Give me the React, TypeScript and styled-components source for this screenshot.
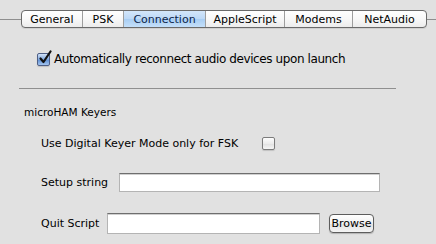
import styled, { createGlobalStyle } from 'styled-components'

const GlobalStyle = createGlobalStyle`
  html, body {
    margin: 0;
    padding: 0;
    background: #e1e1e1;
  }
  body {
    width: 436px;
    height: 244px;
    overflow: hidden;
    font-family: "DejaVu Sans", "Liberation Sans", sans-serif;
    color: #000;
  }
`

const tabs = [
  { label: 'General', w: 60 },
  { label: 'PSK', w: 40 },
  { label: 'Connection', w: 81 },
  { label: 'AppleScript', w: 78 },
  { label: 'Modems', w: 67 },
  { label: 'NetAudio', w: 73 },
]

// @ NOTE tab strip

const TabStrip = styled.div`
  display: flex;
  align-items: center;
  margin-top: 10px;
  height: 18px;
`

const Rule = styled.div<{ $w?: number }>`
  height: 1px;
  background: #8e8e8e;
  width: ${(p) => (p.$w ? `${p.$w}px` : 'auto')};
  flex: ${(p) => (p.$w ? 'none' : '1')};
`

const Segments = styled.div`
  display: flex;
  height: 16px;
  border: 1px solid #6a6a6a;
  border-radius: 4px;
  overflow: hidden;
  background: linear-gradient(#ffffff, #f7f7f7 55%, #ececec);
  box-shadow: 0 1px 0 rgba(0, 0, 0, 0.08);
`

const Segment = styled.div<{ $w: number; $active?: boolean }>`
  width: ${(p) => p.$w}px;
  display: flex;
  align-items: center;
  justify-content: center;
  font-size: 11px;
  color: ${(p) => (p.$active ? '#0c1f4a' : '#000')};
  background: ${(p) =>
    p.$active ? 'linear-gradient(#d3e6fa, #bcd8f6 50%, #a8cdf3 51%, #c4e0fa)' : 'transparent'};
  & + & {
    border-left: 1px solid #9e9e9e;
  }
`

// @ NOTE body

const Panel = styled.div`
  display: flex;
  flex-direction: column;
`

const CheckRow = styled.label<{ $left: number; $top: number; $gap: number }>`
  display: flex;
  align-items: center;
  gap: ${(p) => p.$gap}px;
  margin: ${(p) => p.$top}px 0 0 ${(p) => p.$left}px;
  font-size: 12px;
  letter-spacing: -0.4px;
  height: 14px;
`

const Box = styled.span<{ $checked?: boolean }>`
  position: relative;
  width: 11px;
  height: 11px;
  border: 1px solid ${(p) => (p.$checked ? '#4e5f86' : '#7c7c7c')};
  border-radius: 2px;
  background: ${(p) =>
    p.$checked
      ? 'linear-gradient(#d2e2f7, #7ea7de 50%, #5c8dd3 51%, #a3c4ee)'
      : 'linear-gradient(#fdfdfd, #ececec 50%, #e0e0e0 51%, #f6f6f6)'};
  box-shadow: 0 1px 1px rgba(0, 0, 0, 0.15);
  flex: none;
  svg {
    position: absolute;
    left: 0px;
    top: -4px;
  }
`

const Separator = styled.div`
  margin: 22px 0 0 19px;
  width: 377px;
  height: 1px;
  background: #8f8f8f;
`

const SectionTitle = styled.div`
  margin: 17px 0 0 24px;
  font-size: 10.5px;
  height: 13px;
  line-height: 13px;
`

const FieldRow = styled.div<{ $top: number }>`
  display: flex;
  align-items: center;
  margin: ${(p) => p.$top}px 0 0 41px;
  font-size: 11px;
`

const FieldLabel = styled.span<{ $w: number }>`
  width: ${(p) => p.$w}px;
  flex: none;
`

const TextField = styled.div<{ $w: number; $h: number }>`
  width: ${(p) => p.$w}px;
  height: ${(p) => p.$h}px;
  box-sizing: border-box;
  background: #fff;
  border: 1px solid #b4b4b4;
  border-top: 1px solid #6e6e6e;
  box-shadow: inset 0 1px 0 #d0d0d0;
`

const Button = styled.div`
  margin-left: 9px;
  width: 45px;
  height: 19px;
  box-sizing: border-box;
  border: 1px solid #5d5d5d;
  border-radius: 4px;
  background: linear-gradient(#ffffff, #f1f1f1 50%, #e1e1e1 51%, #f4f4f4);
  box-shadow: 0 1px 1px rgba(0, 0, 0, 0.2);
  display: flex;
  align-items: center;
  justify-content: center;
  font-size: 11px;
`

const Check = () => (
  <svg width="14" height="15" viewBox="0 0 14 15">
    <path d="M2.5 8.5 L5.5 12 L12.5 1.5" fill="none" stroke="#111" strokeWidth="2.2" strokeLinecap="round" strokeLinejoin="round" />
  </svg>
)

const App = () => {
  return (
    <>
      <GlobalStyle />
      <TabStrip>
        <Rule $w={21} />
        <Segments>
          {tabs.map((t) => (
            <Segment key={t.label} $w={t.w} $active={t.label === 'Connection'}>
              {t.label}
            </Segment>
          ))}
        </Segments>
        <Rule />
      </TabStrip>
      <Panel>
        <CheckRow $left={37} $top={24} $gap={4}>
          <Box $checked>
            <Check />
          </Box>
          Automatically reconnect audio devices upon launch
        </CheckRow>
        <Separator />
        <SectionTitle>microHAM Keyers</SectionTitle>
        <FieldRow $top={18}>
          <FieldLabel $w={221}>Use Digital Keyer Mode only for FSK</FieldLabel>
          <Box />
        </FieldRow>
        <FieldRow $top={23}>
          <FieldLabel $w={78}>Setup string</FieldLabel>
          <TextField $w={261} $h={19} />
        </FieldRow>
        <FieldRow $top={21}>
          <FieldLabel $w={66}>Quit Script</FieldLabel>
          <TextField $w={213} $h={21} />
          <Button>Browse</Button>
        </FieldRow>
      </Panel>
    </>
  )
}

export default App
